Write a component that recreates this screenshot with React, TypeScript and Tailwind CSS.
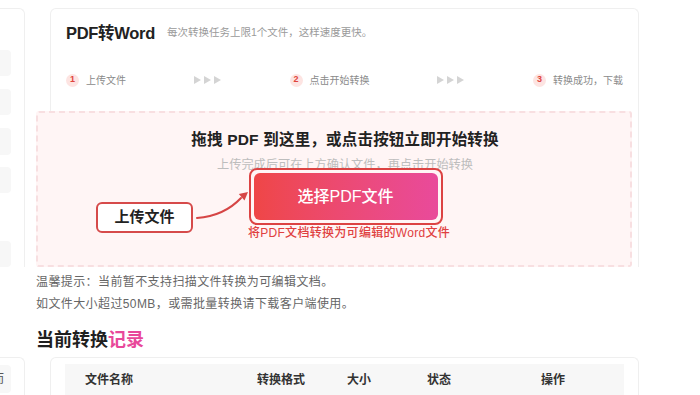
import React from "react";

const steps = [
  { n: "1", label: "上传文件" },
  { n: "2", label: "点击开始转换" },
  { n: "3", label: "转换成功，下载" },
];

const Arrows = () => (
  <svg width="28" height="8" viewBox="0 0 28 8" className="text-[#d4d4d4]">
    <polygon points="0,0 7,4 0,8" fill="currentColor" />
    <polygon points="10,0 17,4 10,8" fill="currentColor" />
    <polygon points="20,0 27,4 20,8" fill="currentColor" />
  </svg>
);

const Sidebar = () => (
  <aside className="w-[25px] shrink-0">
    <div className="mt-[8px] h-[259px] border-t border-r border-[#efefef] rounded-tr-[6px] overflow-hidden flex flex-col">
      <div className="mt-[41px] h-[28px] w-[11px] bg-[#f7f7f7] rounded-r-[4px]" />
      <div className="mt-[13px] h-[28px] w-[11px] bg-[#f7f7f7] rounded-r-[4px]" />
      <div className="mt-[13px] h-[28px] w-[11px] bg-[#f7f7f7] rounded-r-[4px]" />
      <div className="mt-[12px] h-[28px] w-[11px] bg-[#f7f7f7] rounded-r-[4px]" />
      <div className="mt-[48px] h-[28px] w-[11px] bg-[#f7f7f7] rounded-r-[4px]" />
    </div>
    <div className="mt-[90px] h-[40px] border-t border-r border-[#efefef] rounded-tr-[6px] pt-[7px]">
      <div className="h-[28px] w-[11px] bg-[#f7f7f7] rounded-r-[4px] overflow-hidden flex items-center justify-end pr-[7px] whitespace-nowrap text-[12px] text-[#555]">
        而
      </div>
    </div>
  </aside>
);

const DropZone = () => (
  <div className="relative -ml-[15px] w-[596px] h-[156px] bg-[#fff5f5] border-2 border-dashed border-[#f8dfe1] rounded-[3px] pl-[22px] flex flex-col items-center">
    <h2 className="mt-[16px] text-[15.5px] leading-[22px] font-bold text-[#222] tracking-[0.2px]">
      拖拽 PDF 到这里，或点击按钮立即开始转换
    </h2>
    <p className="mt-[5px] text-[12.2px] leading-[18px] text-[#bdbdbd]">
      上传完成后可在上方确认文件，再点击开始转换
    </p>
    <div className="relative -mt-[6px] ml-[1px] border-2 border-[#dc4343] rounded-[8px] p-[3px] bg-[#fff5f5]">
      <button className="w-[184px] h-[47px] rounded-[6px] bg-linear-to-r from-[#ef4646] to-[#e94a9b] text-white text-[16px] font-medium">
        选择PDF文件
      </button>
    </div>
    <p className="mt-[1px] ml-[8px] text-[12px] leading-[15px] font-medium tracking-[0.3px] text-[#e04040]">
      将PDF文档转换为可编辑的Word文件
    </p>

    <div className="absolute left-[58px] top-[89px] w-[97px] h-[31px] border-2 border-[#d64a4a] rounded-[6px] bg-white flex items-center justify-center text-[15px] font-bold text-[#222]">
      上传文件
    </div>
    <svg
      className="absolute left-[157px] top-[72px]"
      width="60"
      height="40"
      viewBox="195 185 60 40"
    >
      <path d="M197 218 Q224 216 241 198" fill="none" stroke="#d64545" strokeWidth="2" strokeLinecap="round" />
      <polygon points="248,192 244.5,200.5 238.8,194" fill="#d64545" />
    </svg>
  </div>
);

export default function App() {
  return (
    <div className="w-[700px] h-[395px] overflow-hidden bg-white flex font-['Liberation_Sans','Noto_Sans_CJK_SC',sans-serif]">
      <Sidebar />
      <main className="ml-[11px] w-[610px]">
        <section className="mt-[8px] ml-[14px] w-[589px] h-[259px] border-t border-x border-[#efefef] rounded-t-[6px]">
          <div className="h-[102px] px-[15px] pt-[13px]">
            <div className="flex items-center h-[22px]">
              <h1 className="text-[16.5px] font-bold text-[#222] tracking-[-0.3px]">PDF转Word</h1>
              <span className="ml-[12px] text-[10.5px] text-[#9a9a9a]">每次转换任务上限1个文件，这样速度更快。</span>
            </div>
            <div className="mt-[29px] flex items-center justify-between h-[14px]">
              {steps.map((s, i) => (
                <React.Fragment key={s.n}>
                  {i > 0 && <Arrows />}
                  <div className="flex items-center">
                    <span className="w-[13px] h-[13px] rounded-full bg-[#fde4e2] text-[#e0443c] text-[9px] font-bold flex items-center justify-center">
                      {s.n}
                    </span>
                    <span className="ml-[7px] text-[10px] text-[#8a8a8a]">{s.label}</span>
                  </div>
                </React.Fragment>
              ))}
            </div>
          </div>
          <DropZone />
        </section>

        <div className="mt-[4px] text-[12px] leading-[22px] text-[#666] tracking-[0.4px]">
          <p>温馨提示：当前暂不支持扫描文件转换为可编辑文档。</p>
          <p>如文件大小超过50MB，或需批量转换请下载客户端使用。</p>
        </div>

        <h3 className="mt-[12px] text-[18px] leading-[26px] font-bold text-[#1f1f1f]">
          当前转换<span className="text-[#e8489a]">记录</span>
        </h3>

        <section className="mt-[4px] ml-[14px] w-[589px] h-[60px] border-t border-x border-[#efefef] rounded-t-[6px] pt-[6px] px-[14px]">
          <div className="h-[32px] bg-[#f7f7f7] grid grid-cols-[192px_90px_80px_114px_1fr] items-center text-[12px] font-bold text-[#333]">
            <span className="pl-[20px]">文件名称</span>
            <span>转换格式</span>
            <span>大小</span>
            <span>状态</span>
            <span>操作</span>
          </div>
        </section>
      </main>
    </div>
  );
}
